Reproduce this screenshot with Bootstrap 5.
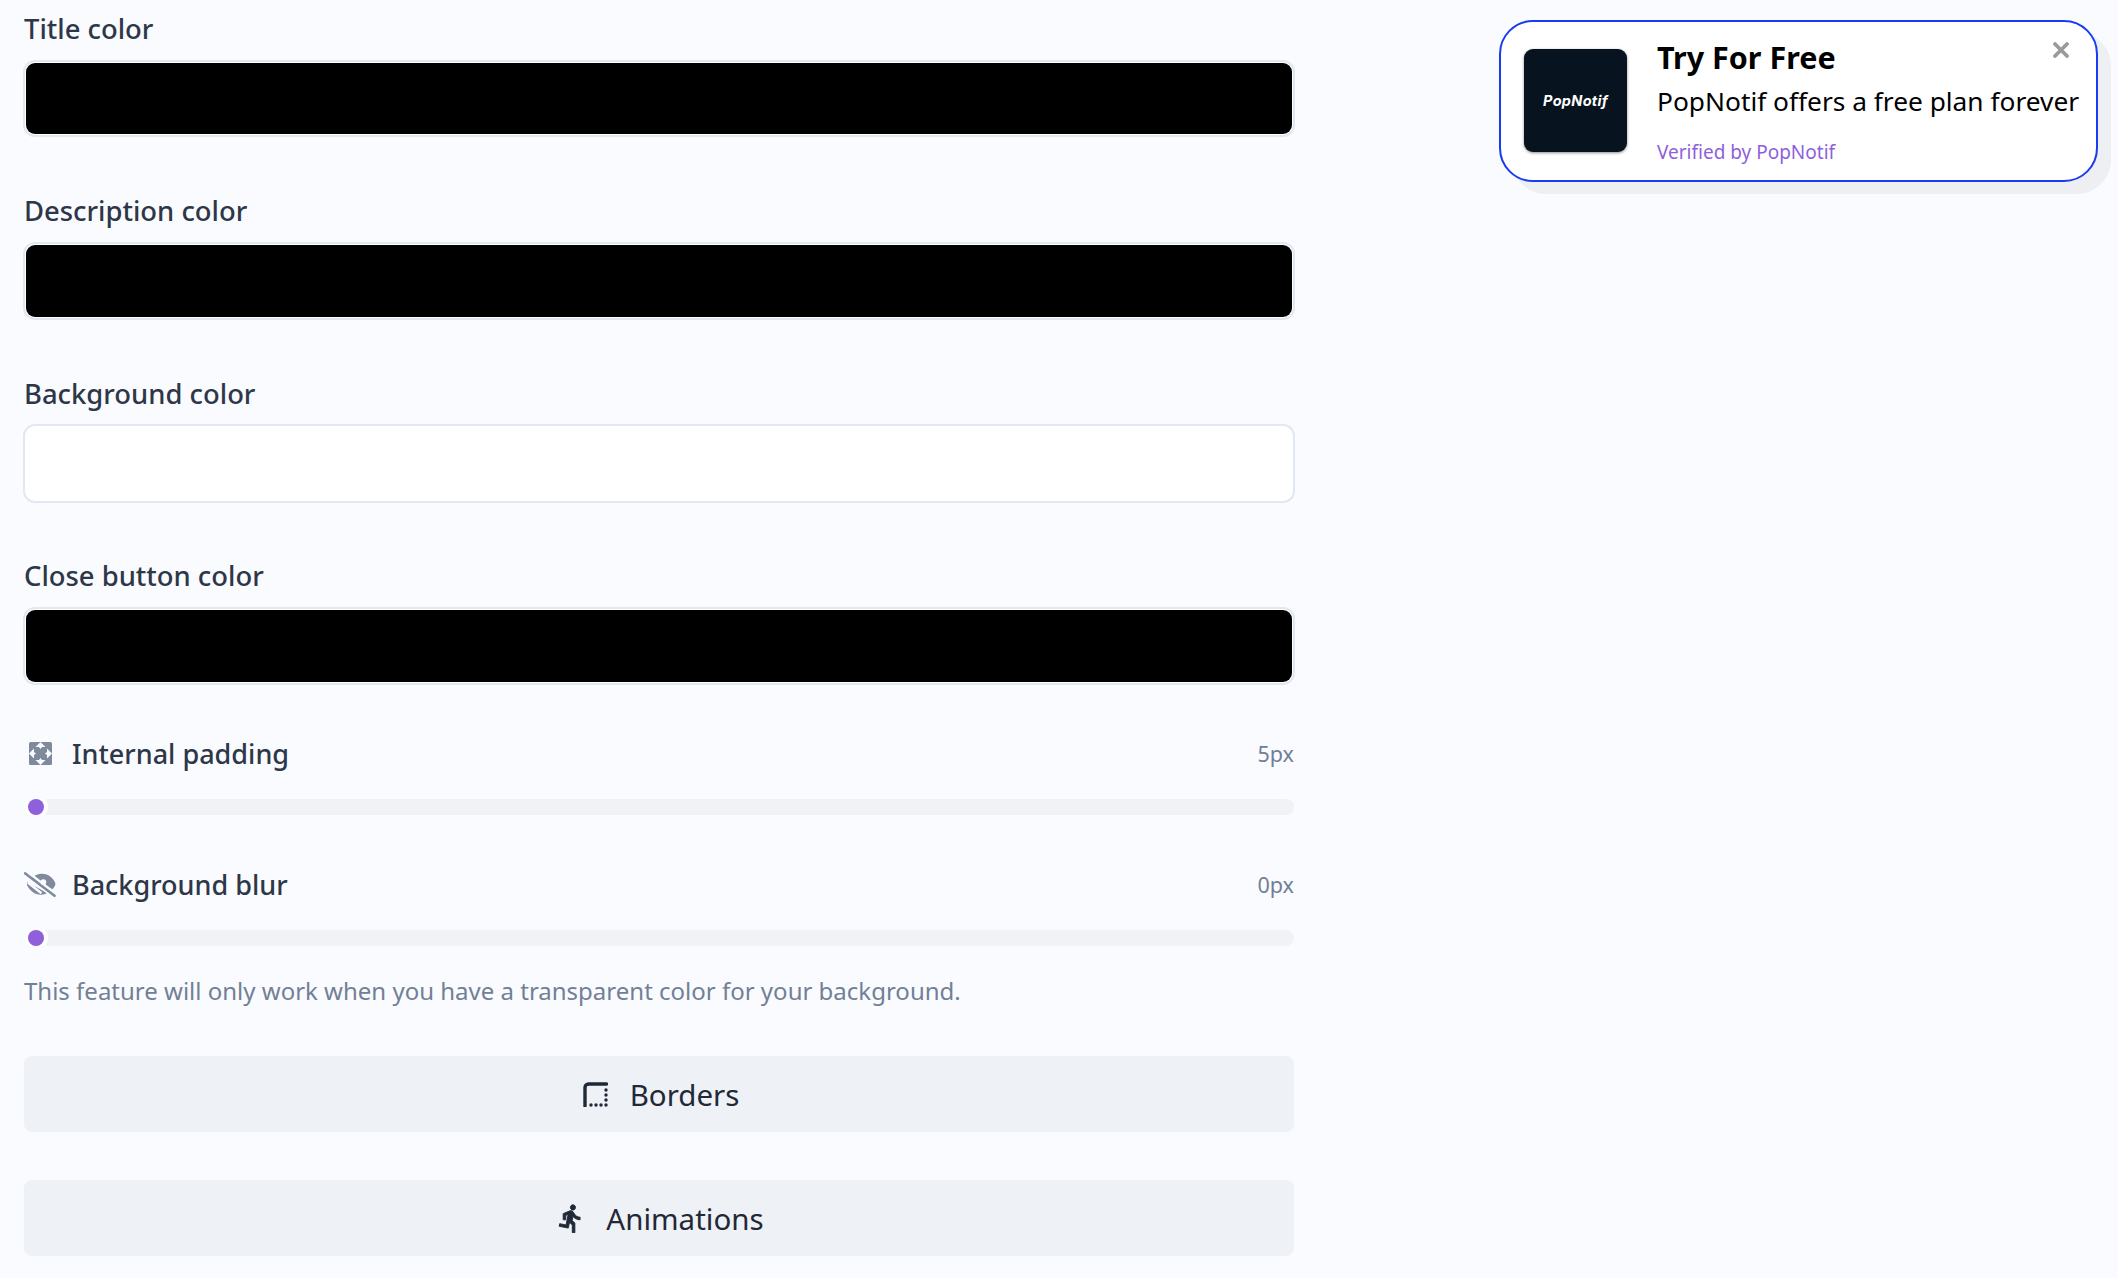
<!DOCTYPE html>
<html lang="en"><head><meta charset="utf-8"><title>PopNotif</title>
<link href="https://cdn.jsdelivr.net/npm/bootstrap@5.3.0/dist/css/bootstrap.min.css" rel="stylesheet">
<style>
html,body{background:#fafbff;font-family:"Noto Sans",sans-serif;color:#2d3748;overflow:hidden}
.shell{height:1278px;padding:0 20px 0 24px}
.editor{width:1270px;flex:none}
.fld-label{display:block;font-size:27.400px;line-height:32px;font-weight:500;padding-top:1px;margin:0 0 15px;color:#2d3748}
.fld{margin-bottom:57px}
.fld:first-child{padding-top:12px}
input.swatch{display:block;height:77.4px;padding:1px;margin-left:-1px;width:1272px;max-width:none;border:2px solid #e2e8f0;border-radius:12px;background:#fff}
input.swatch::-webkit-color-swatch-wrapper{padding:0}
input.swatch::-webkit-color-swatch{border:0;border-radius:9px}
input.swatch.tall{height:79px;margin-top:-.8px;margin-bottom:-.8px}
.fld.before-sliders{margin-bottom:53.4px}
.slide-head{height:32px;font-size:27px;font-weight:500;gap:16px;margin-bottom:29px}
.slide-head small{font-size:21.600px;font-weight:400;color:#718096}
.ico-slot{width:32px;display:flex;justify-content:center;flex:none}
.slide-block{margin-bottom:54px}
.slide-block.last{margin-bottom:27px}
input.slider{display:block;-webkit-appearance:none;appearance:none;width:100%;height:16px;padding:0 4px;background:#f0f2f5;border-radius:8px;overflow:hidden}
input.slider::-webkit-slider-runnable-track{background:transparent;height:16px}
input.slider::-webkit-slider-thumb{-webkit-appearance:none;appearance:none;width:16px;height:16px;margin-top:0;border-radius:50%;background:#8f5fdc;box-shadow:0 0 0 4px #fff;border:0}
.hint{font-size:24px;line-height:36px;color:#718096;margin:0 0 47px}
.wide-btn{display:flex;align-items:center;justify-content:center;gap:22px;width:100%;height:76px;background:#eef1f6;border:0;border-radius:8px;font-size:29.500px;color:#1f2937;margin-bottom:48px;padding:2px 0 0 4px}
.wide-btn:hover{background:#eef1f6;color:#1f2937}
.notice{width:599px;height:162px;margin-top:20px;background:#fff;border:2px solid #1a3cf0;border-radius:34px;box-shadow:13px 12px 0 #eeeff3;padding:27px 0 0 23px;color:#000;gap:30px}
.thumbnail{width:103px;height:103px;flex:none;background:#07131f;border-radius:9px;box-shadow:0 1px 3px rgba(0,0,0,.45);color:#fff;font-family:Inter,sans-serif;font-weight:700;font-style:italic;font-size:14.500px;letter-spacing:.3px}
.notice-title{font-size:30.500px;line-height:40px;font-weight:700;margin-top:-12px}
.notice-text{font-size:26.300px;line-height:40px;margin-top:4px;white-space:nowrap}
.notice-link{font-size:19px;line-height:28px;color:#8f5fdc;margin-top:17px}
.close-x{top:20px;right:27px;width:16px;height:16px;line-height:0}
</style></head>
<body>
<div class="shell d-flex justify-content-between align-items-start">
<main class="editor">
<div class="fld"><label class="fld-label" for="c1">Title color</label><input id="c1" type="color" class="swatch" value="#000000"></div>
<div class="fld"><label class="fld-label" for="c2">Description color</label><input id="c2" type="color" class="swatch" value="#000000"></div>
<div class="fld"><label class="fld-label" for="c3">Background color</label><input id="c3" type="color" class="swatch tall" value="#ffffff"></div>
<div class="fld before-sliders"><label class="fld-label" for="c4">Close button color</label><input id="c4" type="color" class="swatch" value="#000000"></div>

<div class="slide-block">
<div class="slide-head d-flex align-items-center">
<span class="ico-slot"><svg width="23" height="23" viewBox="0 0 23 23"><rect width="23" height="23" rx="1.5" fill="#7f8a9c"/><path d="M11.5 0L6.500 5h3.500l1.500 2 1.500-2H16.500zM11.500 23L6.500 18h3.500l1.500-2 1.500 2h3.500zM0 11.500L5 6.500V10l2 1.500-2 1.500v3.500zM23 11.500L18 6.500V10l-2 1.500 2 1.500v3.500z" fill="#fafbff"/></svg></span>
<span>Internal padding</span><small class="ms-auto">5px</small>
</div>
<input class="slider" type="range" min="5" max="50" value="5" aria-label="Internal padding">
</div>

<div class="slide-block last">
<div class="slide-head d-flex align-items-center">
<span class="ico-slot"><svg width="33" height="25" viewBox="0 0 33 25"><path d="M6 8C10 3 15 1.500 19 1.500c6 0 11 4.500 13 9 .5 1.200.5 2 0 3-.6 1.300-1.500 2.700-2.800 4L6 8z" fill="#7f8a9c"/><path d="M3 13c3 6 8 10 14 10 2.500 0 5-.6 7-1.800L3 10z" fill="#7f8a9c"/><path d="M4 5l22 17M8 3l20 15.500M4 10.500l14 11" stroke="#fafbff" stroke-width="2.600"/><path d="M1 1l30.500 23" stroke="#7f8a9c" stroke-width="2.600" stroke-linecap="round"/><circle cx="20" cy="10" r="3" fill="#fafbff"/></svg></span>
<span>Background blur</span><small class="ms-auto">0px</small>
</div>
<input class="slider" type="range" min="0" max="50" value="0" aria-label="Background blur">
</div>
<p class="hint">This feature will only work when you have a transparent color for your background.</p>

<button class="btn wide-btn" type="button"><svg width="25" height="25" viewBox="0 0 25 25" fill="#1f2937"><path d="M2 24V5.500A3.500 3.500 0 0 1 5.500 2H23.500" fill="none" stroke="#1f2937" stroke-width="3.400" stroke-linecap="round"/><circle cx="23" cy="8" r="1.700"/><circle cx="23" cy="13" r="1.700"/><circle cx="23" cy="18" r="1.700"/><circle cx="23" cy="23" r="1.700"/><circle cx="8" cy="23" r="1.700"/><circle cx="13" cy="23" r="1.700"/><circle cx="18" cy="23" r="1.700"/></svg><span>Borders</span></button>
<button class="btn wide-btn" type="button"><svg width="26" height="29" viewBox="2 1 20 22" fill="#1f2937" stroke="#1f2937" stroke-width=".7" stroke-linejoin="round"><path d="M13.490 5.480c1.100 0 2-.9 2-2s-.9-2-2-2-2 .9-2 2 .9 2 2 2zm-3.600 13.900l1-4.400 2.100 2v6h2v-7.500l-2.100-2 .6-3c1.300 1.500 3.300 2.500 5.500 2.500v-2c-1.900 0-3.500-1-4.300-2.400l-1-1.600c-.4-.6-1-1-1.700-1-.3 0-.5.1-.8.1l-5.200 2.200v4.700h2v-3.400l1.800-.7-1.600 8.100-4.900-1-.4 2 7 1.400z"/></svg><span>Animations</span></button>
</main>

<aside class="notice d-flex position-relative">
<div class="thumbnail d-flex align-items-center justify-content-center">PopNotif</div>
<div>
<div class="notice-title">Try For Free</div>
<div class="notice-text">PopNotif offers a free plan forever</div>
<div class="notice-link">Verified by PopNotif</div>
</div>
<span class="close-x position-absolute"><svg width="16" height="16" viewBox="0 0 16 16"><path d="M2 2l12 12M14 2L2 14" stroke="#9a9a9a" stroke-width="3.800" stroke-linecap="round"/></svg></span>
</aside>
</div>
<script src="https://cdn.jsdelivr.net/npm/bootstrap@5.3.0/dist/js/bootstrap.bundle.min.js"></script>
</body></html>
